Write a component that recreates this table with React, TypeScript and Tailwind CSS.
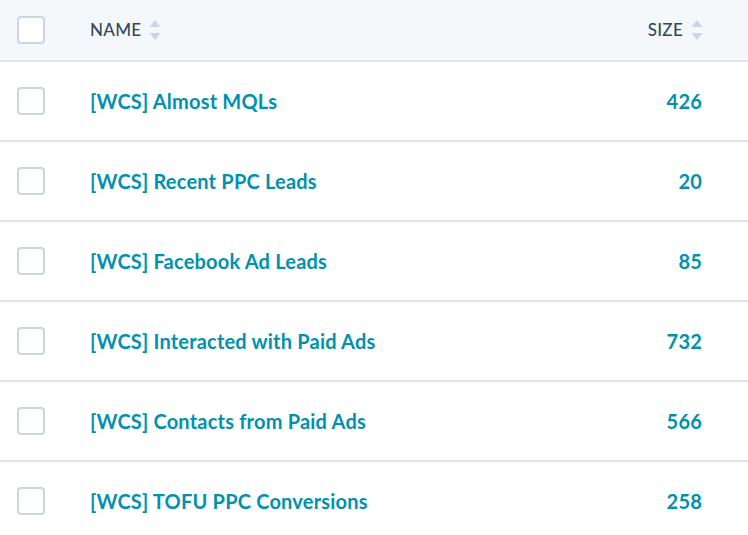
import React from "react";

const rows = [
  { name: "[WCS] Almost MQLs", size: "426" },
  { name: "[WCS] Recent PPC Leads", size: "20" },
  { name: "[WCS] Facebook Ad Leads", size: "85" },
  { name: "[WCS] Interacted with Paid Ads", size: "732" },
  { name: "[WCS] Contacts from Paid Ads", size: "566" },
  { name: "[WCS] TOFU PPC Conversions", size: "258" },
];

function Checkbox() {
  return <div className="w-[28px] h-[28px] rounded-[4px] border-2 border-[#cbd6e2] bg-white shrink-0" />;
}

function SortArrows() {
  return (
    <svg width="12" height="22" viewBox="0 0 12 22" className="ml-[8px]">
      <path d="M6 1 L11.5 8 L0.5 8 Z" fill="#cbd6e2" />
      <path d="M6 21 L11.5 14 L0.5 14 Z" fill="#cbd6e2" />
    </svg>
  );
}

export default function App() {
  return (
    <div className="w-[748px] h-[535px] overflow-hidden bg-white" style={{ fontFamily: "Lato, 'Noto Sans', sans-serif" }}>
      <div className="flex items-center h-[62px] bg-[#f5f8fa] border-b-2 border-[#dfe3eb]">
        <div className="pl-[17px] w-[90px] flex items-center"><Checkbox /></div>
        <div className="flex-1 flex items-center text-[17px] text-[#33475b] font-medium tracking-[0.3px]">
          NAME<SortArrows />
        </div>
        <div className="pr-[45px] flex items-center text-[17px] text-[#33475b] font-medium tracking-[0.3px]">
          SIZE<SortArrows />
        </div>
      </div>
      {rows.map((r) => (
        <div key={r.name} className="flex items-center h-[80px] border-b-2 border-[#dfe3eb]">
          <div className="pl-[17px] w-[90px] flex items-center"><Checkbox /></div>
          <div className="flex-1 text-[20px] font-bold text-[#0091ae] tracking-[0.2px]">{r.name}</div>
          <div className="pr-[46px] text-[20px] font-bold text-[#0091ae] tracking-[0.2px]">{r.size}</div>
        </div>
      ))}
    </div>
  );
}
